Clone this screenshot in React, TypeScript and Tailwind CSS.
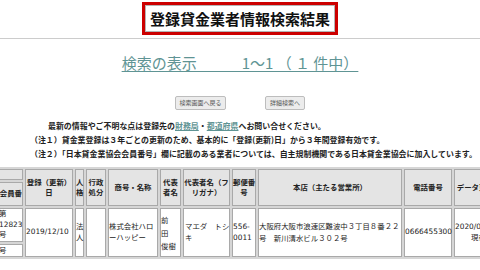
const jp = { fontFamily: '"Noto Sans CJK JP", "Noto Sans", sans-serif' };
const cell = { fontFamily: '"DejaVu Sans", "Noto Sans CJK JP", sans-serif' };

function Th({ children, className = '' }: { children?: React.ReactNode; className?: string }) {
  return (
    <th className={`border border-[#a9a9a9] bg-[#e4e4e4] p-0 align-middle text-center font-bold text-[#222] leading-[10px] ${className}`}>
      {children}
    </th>
  );
}

function Td({ children, className = 'text-left' }: { children?: React.ReactNode; className?: string }) {
  return (
    <td className={`border border-[#a9a9a9] bg-white p-0 align-middle font-normal text-[#222] leading-[10.5px] ${className}`}>
      {children}
    </td>
  );
}

export default function App() {
  return (
    <div className="w-[480px] h-[270px] overflow-hidden bg-white" style={jp}>
      {/* Title */}
      <div className="flex justify-center pt-[2px]">
        <div className="border-[3px] border-[#cc0000]">
          <div className="border border-[#b5b5b5] h-[27px] px-[4px] flex items-center bg-white">
            <h1 className="text-[15px] font-bold text-[#111] leading-none">登録貸金業者情報検索結果</h1>
          </div>
        </div>
      </div>
      <div className="mt-[3px] h-px bg-[#cccccc]" />

      {/* Result count */}
      <div className="flex justify-center mt-[14px]">
        <a className="text-[15px] leading-[20px] text-[#5f9494] underline underline-offset-2 decoration-1 whitespace-pre">
          検索の表示　　　1〜1 （ １ 件中）
        </a>
      </div>

      {/* Buttons */}
      <div className="flex justify-center gap-[39px] mt-[23px]">
        <button className="w-[51px] h-[14px] bg-[#ececec] border border-[#bdbdbd] rounded-[2px] text-[6px] text-[#555] leading-none">
          検索画面へ戻る
        </button>
        <button className="w-[40px] h-[14px] bg-[#ececec] border border-[#bdbdbd] rounded-[2px] text-[6px] text-[#555] leading-none">
          詳細検索へ
        </button>
      </div>

      {/* Notes */}
      <div className="mt-[9px] pl-[30px] text-[7.95px] leading-[14px] font-bold text-[#222] whitespace-nowrap">
        <p className="indent-[18px]">
          最新の情報やご不明な点は登録先の
          <a className="text-[#5f9494] underline">財務局</a>・
          <a className="text-[#5f9494] underline">都道府県</a>
          へお問い合せください。
        </p>
        <p>（注１）貸金業登録は３年ごとの更新のため、基本的に「登録(更新)日」から３年間登録有効です。</p>
        <p>（注２）「日本貸金業協会会員番号」欄に記載のある業者については、自主規制機関である日本貸金業協会に加入しています。</p>
      </div>

      {/* Result table */}
      <div className="mt-[6px] w-[480px] overflow-hidden">
        <table
          className="table-fixed border-separate border-spacing-[2px] bg-[#d6d6d6] ml-[-4px] w-[510px] text-[7.4px]"
          style={cell}
        >
          <colgroup>
            <col className="w-[25px]" />
            <col className="w-[48px]" />
            <col className="w-[9px]" />
            <col className="w-[20px]" />
            <col className="w-[50px]" />
            <col className="w-[21px]" />
            <col className="w-[47px]" />
            <col className="w-[24px]" />
            <col className="w-[144px]" />
            <col className="w-[48px]" />
            <col className="w-[50px]" />
          </colgroup>
          <thead>
            <tr className="h-[37px]">
              <th className="p-0 font-bold text-[#222]">
                <div className="flex flex-col gap-[2px] h-[37px]">
                  <div className="h-[11px] border border-[#a9a9a9] bg-[#e4e4e4]" />
                  <div className="flex-1 border border-[#a9a9a9] bg-[#e4e4e4] flex items-center justify-end overflow-hidden whitespace-nowrap">
                    会員番
                  </div>
                </div>
              </th>
              <Th>登録（更新）<br />日</Th>
              <Th>人<br />格</Th>
              <Th>行政<br />処分</Th>
              <Th>商号・名称</Th>
              <Th>代表<br />者名</Th>
              <Th className="whitespace-nowrap">代表者名（フ<br />リガナ）</Th>
              <Th className="whitespace-nowrap">郵便番<br />号</Th>
              <Th>本店（主たる営業所）</Th>
              <Th>電話番号</Th>
              <Th className="whitespace-nowrap">データ更新日</Th>
            </tr>
          </thead>
          <tbody>
            <tr className="h-[49px]">
              <td className="p-0 text-[#222]">
                <div className="flex flex-col gap-[2px] h-[49px]">
                  <div className="flex-1 border border-[#a9a9a9] bg-white flex items-center leading-[10.5px] whitespace-nowrap overflow-hidden">
                    第<br />12823<br />号
                  </div>
                  <div className="h-[13px] border border-[#a9a9a9] bg-white flex items-center">号</div>
                </div>
              </td>
              <Td className="text-left whitespace-nowrap">2019/12/10</Td>
              <Td className="text-left">法<br />人</Td>
              <Td />
              <Td className="text-left whitespace-nowrap">株式会社ハロ<br />ーハッピー</Td>
              <Td className="text-left align-top pt-[5px] leading-[13px]">前<br />田<br />俊樹</Td>
              <Td className="text-left whitespace-nowrap pl-px">マエダ　トシ<br />キ</Td>
              <Td className="text-left whitespace-nowrap">556-<br />0011</Td>
              <Td className="text-left whitespace-nowrap leading-[12px]">
                大阪府大阪市浪速区難波中３丁目８番２２<br />号　新川清水ビル３０２号
              </Td>
              <Td className="text-left whitespace-nowrap">0666455300</Td>
              <Td className="whitespace-nowrap">
                <div>2020/06/30</div>
                <div className="pl-[16px]">現在</div>
              </Td>
            </tr>
          </tbody>
        </table>
      </div>
    </div>
  );
}
